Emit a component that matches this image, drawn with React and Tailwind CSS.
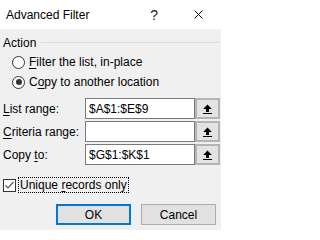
import React from "react";

const font = { fontFamily: '"Liberation Sans", Arial, sans-serif' };

function Radio({ checked }) {
  return (
    <span className="flex h-[13px] w-[13px] shrink-0 items-center justify-center rounded-full border border-[#333] bg-white">
      {checked ? <span className="h-[6px] w-[6px] rounded-full bg-[#333]" /> : null}
    </span>
  );
}

function UpArrow() {
  return (
    <svg width="9" height="10" viewBox="0 0 9 10">
      <path d="M4.5 0.5 L8.8 5 L6 5 L6 8 L3 8 L3 5 L0.2 5 Z" fill="#000" />
      <rect x="0" y="9" width="9" height="1" fill="#000" />
    </svg>
  );
}

function RangeRow({ label, value, className }) {
  return (
    <div className={"flex h-[21px] items-center " + className}>
      <span className="w-[82px] shrink-0">{label}</span>
      <div className="flex h-full flex-1">
        <div className="flex flex-1 items-center border border-[#7a7a7a] bg-white pl-[3px]">{value}</div>
        <div className="flex w-[25px] items-center justify-center border-2 border-[#b4b4b4] bg-[#e3e3e3]">
          <UpArrow />
        </div>
      </div>
    </div>
  );
}

export default function App() {
  return (
    <div className="h-[230px] w-[221px] bg-[#f0f0f0] text-[12px] leading-none text-black" style={font}>
      <div className="flex h-[29px] items-center bg-white pl-[6px]">
        <span>Advanced Filter</span>
        <span className="ml-auto text-[14px] text-[#222]">?</span>
        <span className="ml-[36px] mr-[18px] flex items-center">
          <svg width="9" height="9" viewBox="0 0 9 9">
            <path d="M0.5 0.5 L8.5 8.5 M8.5 0.5 L0.5 8.5" stroke="#111" strokeWidth="1" />
          </svg>
        </span>
      </div>

      <div className="pl-[3px] pr-[1px] pt-[7px]">
        <div className="flex h-[13px] items-center">
          <span>Action</span>
          <span className="ml-[5px] h-px flex-1 bg-[#dcdcdc]" />
        </div>

        <div className="mt-[3px] pl-[9px]">
          <div className="flex h-[20px] items-center gap-[4px]">
            <Radio />
            <span>
              <u className="underline-offset-2">F</u>ilter the list, in-place
            </span>
          </div>
          <div className="flex h-[20px] items-center gap-[4px]">
            <Radio checked />
            <span>
              C<u className="underline-offset-2">o</u>py to another location
            </span>
          </div>
        </div>

        <RangeRow
          className="mt-[6px]"
          label={<><u className="underline-offset-2">L</u>ist range:</>}
          value="$A$1:$E$9"
        />
        <RangeRow
          className="mt-[2px]"
          label={<><u className="underline-offset-2">C</u>riteria range:</>}
          value=""
        />
        <RangeRow
          className="mt-[2px]"
          label={<>Copy <u className="underline-offset-2">t</u>o:</>}
          value="$G$1:$K$1"
        />

        <div className="mt-[12px] flex h-[16px] items-center">
          <span className="flex h-[13px] w-[13px] items-center justify-center border border-[#333] bg-white">
            <svg width="11" height="11" viewBox="0 0 11 11">
              <path d="M1.5 5.5 L4 8 L9.5 2" stroke="#555" strokeWidth="1.2" fill="none" />
            </svg>
          </span>
          <span className="ml-[2px] flex h-[16px] items-center border border-dotted border-black px-[1px]">
            Unique&nbsp;<u className="underline-offset-2">r</u>ecords only
          </span>
        </div>

        <div className="mr-[4px] mt-[11px] flex justify-end gap-[10px]">
          <button className="flex h-[21px] w-[75px] items-center justify-center border-2 border-[#0078d7] bg-[#e1e1e1]">
            OK
          </button>
          <button className="flex h-[21px] w-[75px] items-center justify-center border border-[#adadad] bg-[#e1e1e1]">
            Cancel
          </button>
        </div>
      </div>
    </div>
  );
}
